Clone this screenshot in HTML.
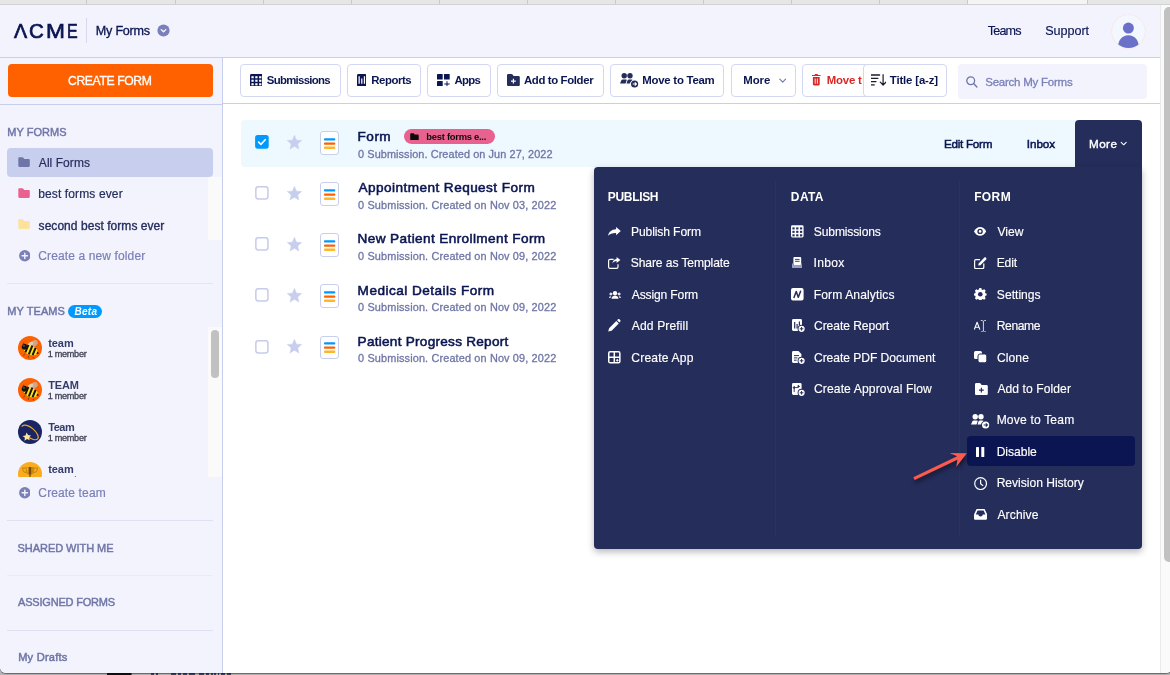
<!DOCTYPE html>
<html lang="en"><head><meta charset="utf-8"><title>My Forms</title>
<style>
html,body{margin:0;padding:0}
body{width:1170px;height:675px;position:relative;overflow:hidden;background:#b7b7b7;font-family:"Liberation Sans",sans-serif}
#win{will-change:transform;position:absolute;left:0;top:0;width:1172px;height:672.6px;overflow:hidden;background:#fff;border-radius:0 0 6px 6px;box-shadow:0 0.5px 1px rgba(0,0,0,0.45)}
#win div,#win svg,#win span.t{position:absolute;box-sizing:border-box}
span.t{white-space:pre;display:block}
.btn{background:#fff;border:1px solid #d3d7f1;border-radius:4px}
</style></head><body>
<div style="position:absolute;left:0;top:668px;width:1170px;height:7px;background:#b6b6b6"></div><div style="position:absolute;left:106.5px;top:668px;width:24px;height:7px;background:#141414"></div><div style="position:absolute;left:130.5px;top:668px;width:1px;height:7px;background:#c0392b"></div><div style="position:absolute;left:151px;top:673px;width:2.5px;height:2px;background:#2b3057;opacity:0.85"></div><div style="position:absolute;left:155.5px;top:673px;width:2.5px;height:2px;background:#2b3057;opacity:0.85"></div><div style="position:absolute;left:171px;top:673px;width:5px;height:2px;background:#2b3057;opacity:0.85"></div><div style="position:absolute;left:177.5px;top:673px;width:3.5px;height:2px;background:#2b3057;opacity:0.85"></div><div style="position:absolute;left:182.5px;top:673px;width:4.5px;height:2px;background:#2b3057;opacity:0.85"></div><div style="position:absolute;left:188.5px;top:673px;width:6.5px;height:2px;background:#2b3057;opacity:0.85"></div><div style="position:absolute;left:199px;top:673px;width:5px;height:2px;background:#2b3057;opacity:0.85"></div><div style="position:absolute;left:205.5px;top:673px;width:3.5px;height:2px;background:#2b3057;opacity:0.85"></div><div style="position:absolute;left:210.5px;top:673px;width:2.5px;height:2px;background:#2b3057;opacity:0.85"></div><div style="position:absolute;left:214px;top:673px;width:2px;height:2px;background:#2b3057;opacity:0.85"></div><div style="position:absolute;left:217.5px;top:673px;width:1.5px;height:2px;background:#2b3057;opacity:0.85"></div><div style="position:absolute;left:220.5px;top:673px;width:4.5px;height:2px;background:#2b3057;opacity:0.85"></div><div style="position:absolute;left:226.5px;top:673px;width:4.5px;height:2px;background:#2b3057;opacity:0.85"></div><div id="win"><div style="left:0px;top:0px;width:1170px;height:5px;background:#e6e6e6;border-bottom:1px solid #d2d2d2"></div>
<div style="left:968px;top:0px;width:119px;height:4px;background:#f4f4f4"></div>
<div style="left:86px;top:0px;width:1px;height:4px;background:#c9c9c9"></div>
<div style="left:175px;top:0px;width:1px;height:4px;background:#c9c9c9"></div>
<div style="left:263px;top:0px;width:1px;height:4px;background:#c9c9c9"></div>
<div style="left:351px;top:0px;width:1px;height:4px;background:#c9c9c9"></div>
<div style="left:439px;top:0px;width:1px;height:4px;background:#c9c9c9"></div>
<div style="left:527px;top:0px;width:1px;height:4px;background:#c9c9c9"></div>
<div style="left:615px;top:0px;width:1px;height:4px;background:#c9c9c9"></div>
<div style="left:703px;top:0px;width:1px;height:4px;background:#c9c9c9"></div>
<div style="left:791px;top:0px;width:1px;height:4px;background:#c9c9c9"></div>
<div style="left:879px;top:0px;width:1px;height:4px;background:#c9c9c9"></div>
<div style="left:967px;top:0px;width:1px;height:4px;background:#c9c9c9"></div>
<div style="left:1087px;top:0px;width:1px;height:4px;background:#c9c9c9"></div>
<div style="left:0px;top:5px;width:1160px;height:52px;background:#f3f3fe"></div>
<div style="left:0px;top:56.5px;width:1160px;height:1px;background:#c8ceed"></div>
<div aria-label="ACME" style="left:0;top:0;width:0;height:0"><span class="t" style="left:13.77px;top:21px;font-size:20.8px;line-height:20.8px;color:#0a1551;-webkit-text-stroke:0.7px #0a1551;transform:scaleX(0.949);transform-origin:0 0;">Λ</span><span class="t" style="left:28.76px;top:21px;font-size:20.8px;line-height:20.8px;color:#0a1551;-webkit-text-stroke:0.7px #0a1551;transform:scaleX(0.986);transform-origin:0 0;">C</span><span class="t" style="left:46.34px;top:21px;font-size:20.8px;line-height:20.8px;color:#0a1551;-webkit-text-stroke:0.7px #0a1551;transform:scaleX(1.092);transform-origin:0 0;">M</span><span class="t" style="left:67.14px;top:21px;font-size:20.8px;line-height:20.8px;color:#0a1551;-webkit-text-stroke:0.7px #0a1551;transform:scaleX(0.767);transform-origin:0 0;">E</span></div>
<div style="left:86px;top:18px;width:1px;height:25px;background:#d5d8f0"></div>
<span class="t" style="left:95.80px;top:25px;font-size:12.6px;line-height:12.6px;color:#0a1551;letter-spacing:-0.235px;-webkit-text-stroke:0.3px #0a1551;">My Forms</span>
<svg style="left:157.1px;top:24.2px;" width="13" height="13" viewBox="0 0 13 13"><circle cx="6.5" cy="6.5" r="6.1" fill="#7a80b8"/><path d="M4.2 5.6 L6.5 7.8 L8.8 5.6" fill="none" stroke="#fff" stroke-width="1.3" stroke-linecap="round" stroke-linejoin="round"/></svg>
<span class="t" style="left:987.66px;top:25px;font-size:12.6px;line-height:12.6px;color:#0a1551;letter-spacing:-0.781px;-webkit-text-stroke:0.15px #0a1551;">Teams</span>
<span class="t" style="left:1045.25px;top:25px;font-size:12.6px;line-height:12.6px;color:#0a1551;letter-spacing:-0.040px;-webkit-text-stroke:0.15px #0a1551;">Support</span>
<div style="left:1112px;top:14.6px;width:33px;height:33px;border-radius:50%;overflow:hidden;background:#f3f7ff;box-shadow:0 0 0 0.6px #fbe3d6"><svg style="left:0px;top:0px;" width="33" height="33" viewBox="0 0 33 33"><g fill="#6b71c9"><circle cx="16.4" cy="13.1" r="5.5"/><path d="M5.9 33 C5.9 25.3 10 20.2 16.4 20.2 C22.8 20.2 26.9 25.3 26.9 33 Z"/></g></svg></div>
<div style="left:0px;top:57.5px;width:222.5px;height:615px;background:#f3f3fe"></div>
<div style="left:222px;top:57.5px;width:1px;height:615px;background:#c8ceed"></div>
<div style="left:8.2px;top:63.8px;width:204.4px;height:33px;background:#ff6100;border-radius:4px"></div>
<span class="t" style="left:68.06px;top:75px;font-size:12.2px;line-height:12.2px;color:#fff;letter-spacing:-0.391px;-webkit-text-stroke:0.3px #fff;">CREATE FORM</span>
<div style="left:0px;top:103.7px;width:222px;height:1px;background:#c8ceed"></div>
<span class="t" style="left:7.22px;top:127px;font-size:11px;line-height:11px;color:#6f76a7;letter-spacing:0.030px;-webkit-text-stroke:0.45px #6f76a7;">MY FORMS</span>
<div style="left:7.2px;top:147.6px;width:205.8px;height:29.5px;background:#c8ceed;border-radius:4px"></div>
<svg style="left:18.4px;top:157.3px;" width="12.2" height="10.2" viewBox="0 0 12.2 10.2"><path d="M0.3 1.2 C0.3 0.6 0.8 0.2 1.4 0.2 H4.3 C4.8 0.2 5.1 0.4 5.4 0.8 L6.2 1.9 H10.6 C11.3 1.9 11.8 2.4 11.8 3.1 V8.8 C11.8 9.5 11.3 10 10.6 10 H1.5 C0.8 10 0.3 9.5 0.3 8.8 Z" fill="#6f76a7"/></svg>
<span class="t" style="left:38.83px;top:157px;font-size:12px;line-height:12px;color:#252d5b;letter-spacing:0.055px;-webkit-text-stroke:0.2px #252d5b;">All Forms</span>
<div style="left:207.6px;top:177.3px;width:14.4px;height:62.5px;background:#fafafb"></div>
<svg style="left:18.4px;top:188.4px;" width="12.2" height="10.2" viewBox="0 0 12.2 10.2"><path d="M0.3 1.2 C0.3 0.6 0.8 0.2 1.4 0.2 H4.3 C4.8 0.2 5.1 0.4 5.4 0.8 L6.2 1.9 H10.6 C11.3 1.9 11.8 2.4 11.8 3.1 V8.8 C11.8 9.5 11.3 10 10.6 10 H1.5 C0.8 10 0.3 9.5 0.3 8.8 Z" fill="#e9628f"/></svg>
<span class="t" style="left:38.17px;top:188px;font-size:12px;line-height:12px;color:#252d5b;letter-spacing:0.128px;-webkit-text-stroke:0.2px #252d5b;">best forms ever</span>
<svg style="left:18.4px;top:219.3px;" width="12.2" height="10.2" viewBox="0 0 12.2 10.2"><path d="M0.3 1.2 C0.3 0.6 0.8 0.2 1.4 0.2 H4.3 C4.8 0.2 5.1 0.4 5.4 0.8 L6.2 1.9 H10.6 C11.3 1.9 11.8 2.4 11.8 3.1 V8.8 C11.8 9.5 11.3 10 10.6 10 H1.5 C0.8 10 0.3 9.5 0.3 8.8 Z" fill="#fde29c"/></svg>
<span class="t" style="left:38.59px;top:220px;font-size:12px;line-height:12px;color:#252d5b;letter-spacing:0.049px;-webkit-text-stroke:0.35px #252d5b;">second best forms ever</span>
<svg style="left:18.9px;top:250.3px;" width="11.6" height="11.6" viewBox="0 0 11.6 11.6"><circle cx="5.8" cy="5.8" r="5.7" fill="#7a80b8"/><path d="M5.8 3.1 V8.5 M3.1 5.8 H8.5" stroke="#f3f3fe" stroke-width="1.4" stroke-linecap="round"/></svg>
<span class="t" style="left:38.33px;top:250px;font-size:12px;line-height:12px;color:#7a80b8;letter-spacing:0.119px;-webkit-text-stroke:0.2px #7a80b8;">Create a new folder</span>
<div style="left:7.2px;top:282.8px;width:205.8px;height:1px;background:#e4e6f5"></div>
<span class="t" style="left:7.22px;top:306px;font-size:11px;line-height:11px;color:#6f76a7;letter-spacing:0.095px;-webkit-text-stroke:0.45px #6f76a7;">MY TEAMS</span>
<div style="left:68.3px;top:304.6px;width:34px;height:13.4px;background:#0099ff;border-radius:7px"></div>
<span class="t" style="left:74.38px;top:307px;font-size:10px;line-height:10px;color:#fff;letter-spacing:0.313px;font-weight:700;font-style:italic;">Beta</span>
<div style="left:207.6px;top:327.3px;width:14.4px;height:150px;background:#fafafb"></div>
<div style="left:211.3px;top:329.8px;width:7.7px;height:48.2px;background:#c1c1c1;border-radius:4px"></div>
<svg style="left:17.7px;top:336.1px;" width="24" height="24" viewBox="0 0 24 24"><circle cx="12" cy="12" r="12" fill="#ff6100"/><ellipse cx="15.6" cy="7.6" rx="4.4" ry="2.9" fill="#cfa58c" transform="rotate(-28 15.6 7.6)"/><ellipse cx="12.6" cy="7.9" rx="3" ry="1.8" fill="#e3c9b3" transform="rotate(-28 12.6 7.9)"/><g transform="rotate(22 12.4 14)"><ellipse cx="12.6" cy="14" rx="7.6" ry="4.7" fill="#ffe01a"/><path d="M8.6 9.9 V18.1 M12.6 9.3 V18.7 M16.4 10 V18" stroke="#17130c" stroke-width="2" fill="none"/><ellipse cx="5.6" cy="13.2" rx="2.6" ry="2.9" fill="#17130c"/><circle cx="4.9" cy="12.6" r="0.9" fill="#4a5f9a"/><path d="M19.4 12.4 L21.6 14 L19.4 15.6 Z" fill="#17130c"/></g><path d="M6.6 17.6 L5.6 19.6 M10.6 19.8 L10.2 21.8 M15 21 L15.8 22.4 M4.6 9.6 L5.8 6.6" stroke="#5a3a12" stroke-width="0.8" fill="none"/></svg>
<span class="t" style="left:48.19px;top:338px;font-size:11px;line-height:11px;color:#343c6a;letter-spacing:-0.065px;font-weight:700;">team</span>
<span class="t" style="left:47.78px;top:350px;font-size:9.1px;line-height:9.1px;color:#3f4152;letter-spacing:-0.288px;-webkit-text-stroke:0.3px #3f4152;">1 member</span>
<svg style="left:17.7px;top:378.2px;" width="24" height="24" viewBox="0 0 24 24"><circle cx="12" cy="12" r="12" fill="#ff6100"/><ellipse cx="15.6" cy="7.6" rx="4.4" ry="2.9" fill="#cfa58c" transform="rotate(-28 15.6 7.6)"/><ellipse cx="12.6" cy="7.9" rx="3" ry="1.8" fill="#e3c9b3" transform="rotate(-28 12.6 7.9)"/><g transform="rotate(22 12.4 14)"><ellipse cx="12.6" cy="14" rx="7.6" ry="4.7" fill="#ffe01a"/><path d="M8.6 9.9 V18.1 M12.6 9.3 V18.7 M16.4 10 V18" stroke="#17130c" stroke-width="2" fill="none"/><ellipse cx="5.6" cy="13.2" rx="2.6" ry="2.9" fill="#17130c"/><circle cx="4.9" cy="12.6" r="0.9" fill="#4a5f9a"/><path d="M19.4 12.4 L21.6 14 L19.4 15.6 Z" fill="#17130c"/></g><path d="M6.6 17.6 L5.6 19.6 M10.6 19.8 L10.2 21.8 M15 21 L15.8 22.4 M4.6 9.6 L5.8 6.6" stroke="#5a3a12" stroke-width="0.8" fill="none"/></svg>
<span class="t" style="left:48.22px;top:380px;font-size:11px;line-height:11px;color:#343c6a;letter-spacing:-0.136px;font-weight:700;">TEAM</span>
<span class="t" style="left:47.78px;top:392px;font-size:9.1px;line-height:9.1px;color:#3f4152;letter-spacing:-0.288px;-webkit-text-stroke:0.3px #3f4152;">1 member</span>
<svg style="left:17.7px;top:419.9px;" width="24" height="24" viewBox="0 0 24 24"><circle cx="12" cy="12" r="12" fill="#1a2563"/><ellipse cx="12" cy="12.4" rx="10" ry="4.6" fill="none" stroke="#f0a72e" stroke-width="1.2" transform="rotate(40 12 12.4)" pathLength="100" stroke-dasharray="76 24" stroke-dashoffset="-48"/><path d="M8.6 12.6 l1.5 2.5 l2.9 0.3 l-2 2.1 l0.7 2.8 l-2.7 -1.2 l-2.5 1.6 l0.4 -2.9 l-2.3 -1.8 l2.9 -0.5 z" fill="#ffe6a0"/></svg>
<span class="t" style="left:48.22px;top:422px;font-size:11px;line-height:11px;color:#343c6a;letter-spacing:-0.479px;font-weight:700;">Team</span>
<span class="t" style="left:47.78px;top:434px;font-size:9.1px;line-height:9.1px;color:#3f4152;letter-spacing:-0.288px;-webkit-text-stroke:0.3px #3f4152;">1 member</span>
<div style="left:0;top:455px;width:207px;height:22px;overflow:hidden"><svg style="left:17.7px;top:6.8px;" width="24" height="24" viewBox="0 0 24 24"><circle cx="12" cy="12" r="12" fill="#fbab1e"/><path d="M7.8 5 H16.2 V8.6 C16.2 11.4 14.4 13 12 13 C9.6 13 7.8 11.4 7.8 8.6 Z" fill="#c98a12"/><path d="M10.9 5 H13.1 V12.8 H10.9 Z" fill="#7a4a08"/><path d="M8.6 5.6 H9.8 V11 Z" fill="#f3c24a"/><path d="M7.8 6.1 H4.6 C4.6 9.2 6.2 10.6 8.6 10.8 M16.2 6.1 H19.4 C19.4 9.2 17.8 10.6 15.4 10.8" fill="none" stroke="#c98a12" stroke-width="1.1"/><rect x="11.1" y="12.5" width="1.8" height="3" fill="#9a6a0e"/><rect x="8.6" y="15.2" width="6.8" height="1.8" fill="#8a5a0c"/></svg><span class="t" style="left:48.19px;top:9px;font-size:11px;line-height:11px;color:#343c6a;letter-spacing:-0.065px;font-weight:700;">team</span><span class="t" style="left:47.43px;top:21px;font-size:9.3px;line-height:9.3px;color:#4b4d5e;letter-spacing:-0.328px;">1 member</span></div>
<svg style="left:18.9px;top:487.3px;" width="11.6" height="11.6" viewBox="0 0 11.6 11.6"><circle cx="5.8" cy="5.8" r="5.7" fill="#7a80b8"/><path d="M5.8 3.1 V8.5 M3.1 5.8 H8.5" stroke="#f3f3fe" stroke-width="1.4" stroke-linecap="round"/></svg>
<span class="t" style="left:38.33px;top:487px;font-size:12px;line-height:12px;color:#7a80b8;letter-spacing:0.133px;-webkit-text-stroke:0.2px #7a80b8;">Create team</span>
<div style="left:7.2px;top:520px;width:205.8px;height:1px;background:#dfe1f1"></div>
<span class="t" style="left:17.49px;top:543px;font-size:11px;line-height:11px;color:#6f76a7;letter-spacing:-0.040px;-webkit-text-stroke:0.45px #6f76a7;">SHARED WITH ME</span>
<div style="left:7.2px;top:575px;width:205.8px;height:1px;background:#eaebf7"></div>
<span class="t" style="left:18.02px;top:597px;font-size:11px;line-height:11px;color:#6f76a7;letter-spacing:-0.193px;-webkit-text-stroke:0.45px #6f76a7;">ASSIGNED FORMS</span>
<div style="left:7.2px;top:629.5px;width:205.8px;height:1px;background:#dfe1f1"></div>
<span class="t" style="left:18.17px;top:652px;font-size:11.1px;line-height:11.1px;color:#6f76a7;letter-spacing:0.224px;-webkit-text-stroke:0.5px #6f76a7;">My Drafts</span>
<div style="left:222.5px;top:103px;width:937.5px;height:1px;background:#c8ceed"></div>
<div class="btn" style="left:240px;top:64px;width:101px;height:32.5px;"></div>
<svg style="left:249.6px;top:73.7px;" width="12.8" height="12.4" viewBox="0 0 12.8 12.4"><rect x="0" y="0" width="12.8" height="12.4" rx="1.5" fill="#0a1551"/><rect x="1.40" y="2.20" width="2.3" height="2.1" fill="#fff"/><rect x="5.25" y="2.20" width="2.3" height="2.1" fill="#fff"/><rect x="9.10" y="2.20" width="2.3" height="2.1" fill="#fff"/><rect x="1.40" y="5.70" width="2.3" height="2.1" fill="#fff"/><rect x="5.25" y="5.70" width="2.3" height="2.1" fill="#fff"/><rect x="9.10" y="5.70" width="2.3" height="2.1" fill="#fff"/><rect x="1.40" y="9.25" width="2.3" height="2.1" fill="#fff"/><rect x="5.25" y="9.25" width="2.3" height="2.1" fill="#fff"/><rect x="9.10" y="9.25" width="2.3" height="2.1" fill="#fff"/></svg>
<span class="t" style="left:266.72px;top:75px;font-size:11.4px;line-height:11.4px;color:#0a1551;letter-spacing:-0.691px;font-weight:700;">Submissions</span>
<div class="btn" style="left:347px;top:64px;width:74px;height:32.5px;"></div>
<svg style="left:356.7px;top:73.6px;" width="9.6" height="12.5" viewBox="0 0 9.6 12.5"><rect x="0" y="0" width="9.6" height="12.5" rx="1.5" fill="#0a1551"/><path d="M2.15 2.2 V9.8 M7.45 2.2 V9.8 M4.8 4.4 V9.8" stroke="#fff" stroke-width="1.25"/></svg>
<span class="t" style="left:371.37px;top:75px;font-size:11.4px;line-height:11.4px;color:#0a1551;letter-spacing:-0.478px;font-weight:700;">Reports</span>
<div class="btn" style="left:427px;top:64px;width:64px;height:32.5px;"></div>
<svg style="left:436.8px;top:73.8px;" width="13.2" height="12.4" viewBox="0 0 13.2 12.4"><g fill="#0a1551"><rect x="0" y="0" width="5.7" height="5.5" rx="0.6"/><rect x="7" y="0" width="5.7" height="5.5" rx="0.6"/><rect x="0" y="6.9" width="5.7" height="5.5" rx="0.6"/><path d="M9.5 7.2 h1 v2.2 h2.2 v1 h-2.2 v2.2 h-1 v-2.2 h-2.2 v-1 h2.2 z"/></g></svg>
<span class="t" style="left:454.54px;top:75px;font-size:11.4px;line-height:11.4px;color:#0a1551;letter-spacing:-0.708px;font-weight:700;">Apps</span>
<div class="btn" style="left:497px;top:64px;width:107px;height:32.5px;"></div>
<svg style="left:507px;top:74px;" width="12.8" height="12" viewBox="0 0 12.8 12"><path d="M0 1.3 C0 0.6 0.6 0 1.3 0 H4.4 C4.9 0 5.3 0.2 5.6 0.6 L6.6 2 H11.5 C12.3 2 12.8 2.6 12.8 3.3 V10.7 C12.8 11.4 12.3 12 11.5 12 H1.3 C0.6 12 0 11.4 0 10.7 Z" fill="#252d5b"/><path d="M6.4 4.7 V9.5 M4 7.1 H8.8" stroke="#fff" stroke-width="1.2"/></svg>
<span class="t" style="left:523.96px;top:75px;font-size:11.4px;line-height:11.4px;color:#0a1551;letter-spacing:-0.367px;font-weight:700;">Add to Folder</span>
<div class="btn" style="left:610px;top:64px;width:114px;height:32.5px;"></div>
<svg style="left:620px;top:72.5px;" width="19" height="15.4" viewBox="0 0 19 15.4"><g fill="#252d5b"><circle cx="4.2" cy="2.8" r="2.7"/><circle cx="10" cy="2.8" r="2.7"/><path d="M0 10.4 L1.4 7.2 C1.6 6.7 2.1 6.4 2.7 6.4 H5.9 C6.5 6.4 6.8 6.9 6.6 7.4 L5.5 10.4 Z"/><path d="M6.5 10.4 L7.6 7.2 C7.8 6.7 8.3 6.4 8.9 6.4 H11.6 C12.2 6.4 12.7 6.8 12.8 7.3 C11.3 7.7 10.4 8.9 10.2 10.4 Z"/><circle cx="14.6" cy="11" r="4.3" fill="#fff"/><circle cx="14.6" cy="11" r="3.6"/></g><path d="M12.7 11 H16 M14.8 9.4 L16.4 11 L14.8 12.6" stroke="#fff" stroke-width="1.15" fill="none"/></svg>
<span class="t" style="left:642.25px;top:75px;font-size:11.4px;line-height:11.4px;color:#0a1551;letter-spacing:-0.238px;font-weight:700;">Move to Team</span>
<div class="btn" style="left:731px;top:64px;width:65px;height:32.5px;"></div>
<span class="t" style="left:743.17px;top:75px;font-size:11.4px;line-height:11.4px;color:#0a1551;font-weight:700;">More</span>
<svg style="left:778.5px;top:77.5px;" width="7.4" height="5.4" viewBox="0 0 7.4 5.4"><path d="M0.8 1.2 L3.7 4.1 L6.6 1.2" fill="none" stroke="#6f76a7" stroke-width="1.1" stroke-linecap="round" stroke-linejoin="round"/></svg>
<div class="btn" style="left:802.3px;top:64px;width:70px;height:32.5px;overflow:hidden"></div>
<svg style="left:812px;top:74.2px;" width="8.6" height="11.4" viewBox="0 0 8.6 11.4"><path d="M0 1.5 H8.6 M2.8 0.5 H5.8" stroke="#dc2626" stroke-width="1.2" fill="none"/><path d="M0.9 3 H7.7 V10.2 C7.7 10.9 7.2 11.4 6.5 11.4 H2.1 C1.4 11.4 0.9 10.9 0.9 10.2 Z" fill="#dc2626"/><path d="M3.2 4.6 V9.7 M5.4 4.6 V9.7" stroke="#fff" stroke-width="0.9"/></svg>
<span class="t" style="left:826.76px;top:75px;font-size:11.4px;line-height:11.4px;color:#dc2626;letter-spacing:-0.214px;font-weight:700;">Move t</span>
<div class="btn" style="left:863px;top:64px;width:84px;height:32.5px;"></div>
<svg style="left:871px;top:74px;" width="15.4" height="12" viewBox="0 0 15.4 12"><path d="M0.2 1 H8.6 M0.2 4.3 H6.9 M0.2 7.6 H5 M0.2 10.9 H3.2" stroke="#1c1c2e" stroke-width="1.3" stroke-linecap="round" fill="none"/><path d="M12.1 0.7 V10.9 M9.3 8.2 L12.1 11 L14.9 8.2" stroke="#1c1c2e" stroke-width="1.2" fill="none" stroke-linecap="round" stroke-linejoin="round"/></svg>
<span class="t" style="left:889.87px;top:75px;font-size:11.4px;line-height:11.4px;color:#0a1551;letter-spacing:-0.164px;font-weight:700;">Title [a-z]</span>
<div style="left:957.7px;top:63.8px;width:189.3px;height:34.9px;background:#f3f3fe;border-radius:4px"></div>
<svg style="left:966.3px;top:76.1px;" width="11.6" height="11.6" viewBox="0 0 11.6 11.6"><circle cx="4.7" cy="4.7" r="3.9" fill="none" stroke="#6f76a7" stroke-width="1.3"/><path d="M7.6 7.6 L10.9 10.9" stroke="#6f76a7" stroke-width="1.4" stroke-linecap="round"/></svg>
<span class="t" style="left:985.19px;top:77px;font-size:11.5px;line-height:11.5px;color:#7a80b8;letter-spacing:-0.229px;-webkit-text-stroke:0.3px #7a80b8;">Search My Forms</span>
<div style="left:240.7px;top:120.2px;width:900.6px;height:46.4px;background:#edf8ff;border-radius:4px 0 0 4px"></div>
<svg style="left:255.45px;top:135.4px;" width="14" height="14" viewBox="0 0 14 14"><rect x="0.1" y="0.1" width="13.6" height="13.6" rx="2.6" fill="#0099ff"/><path d="M3.6 7.1 L5.9 9.4 L10.2 4.7" fill="none" stroke="#fff" stroke-width="1.6" stroke-linecap="round" stroke-linejoin="round"/></svg>
<svg style="left:287.1px;top:135.2px;" width="14.9" height="14.4" viewBox="0 0 14.4 13.8"><path d="M7.2 0.3 L9.1 4.9 L14.1 5.3 L10.3 8.6 L11.5 13.5 L7.2 10.9 L2.9 13.5 L4.1 8.6 L0.3 5.3 L5.3 4.9 Z" fill="#c8ceed" stroke="#c8ceed" stroke-width="0.5" stroke-linejoin="round"/></svg>
<div style="left:320.3px;top:131.3px;width:18.6px;height:23.6px;background:#fff;border:1px solid #c8ceed;border-radius:3px"></div>
<svg style="left:324px;top:138.0px;" width="12" height="12" viewBox="0 0 12 12"><rect x="0" y="0.2" width="11.3" height="2.3" rx="0.9" fill="#0099ff"/><rect x="0" y="4.4" width="11.3" height="2.3" rx="0.9" fill="#ff6100"/><rect x="0" y="8.6" width="11.3" height="2.3" rx="0.9" fill="#ffb629"/></svg>
<span class="t" style="left:357.62px;top:130px;font-size:13.6px;line-height:13.6px;color:#0a1551;letter-spacing:0.458px;-webkit-text-stroke:0.55px #0a1551;">Form</span>
<span class="t" style="left:358.03px;top:149px;font-size:10.9px;line-height:10.9px;color:#6f76a7;letter-spacing:0.088px;-webkit-text-stroke:0.3px #6f76a7;">0 Submission. Created on Jun 27, 2022</span>
<svg style="left:255.45px;top:186.35000000000002px;" width="14" height="14" viewBox="0 0 14 14"><rect x="0.85" y="0.85" width="12.1" height="12.1" rx="2.4" fill="#fff" stroke="#c6cbeb" stroke-width="1.5"/></svg>
<svg style="left:287.1px;top:186.25px;" width="14.9" height="14.4" viewBox="0 0 14.4 13.8"><path d="M7.2 0.3 L9.1 4.9 L14.1 5.3 L10.3 8.6 L11.5 13.5 L7.2 10.9 L2.9 13.5 L4.1 8.6 L0.3 5.3 L5.3 4.9 Z" fill="#c8ceed" stroke="#c8ceed" stroke-width="0.5" stroke-linejoin="round"/></svg>
<div style="left:320.3px;top:182.35000000000002px;width:18.6px;height:23.6px;background:#fff;border:1px solid #c8ceed;border-radius:3px"></div>
<svg style="left:324px;top:189.05px;" width="12" height="12" viewBox="0 0 12 12"><rect x="0" y="0.2" width="11.3" height="2.3" rx="0.9" fill="#0099ff"/><rect x="0" y="4.4" width="11.3" height="2.3" rx="0.9" fill="#ff6100"/><rect x="0" y="8.6" width="11.3" height="2.3" rx="0.9" fill="#ffb629"/></svg>
<span class="t" style="left:358.53px;top:181px;font-size:13.6px;line-height:13.6px;color:#0a1551;letter-spacing:0.438px;-webkit-text-stroke:0.55px #0a1551;">Appointment Request Form</span>
<span class="t" style="left:358.03px;top:200px;font-size:10.9px;line-height:10.9px;color:#6f76a7;letter-spacing:0.142px;-webkit-text-stroke:0.3px #6f76a7;">0 Submission. Created on Nov 03, 2022</span>
<svg style="left:255.45px;top:237.4px;" width="14" height="14" viewBox="0 0 14 14"><rect x="0.85" y="0.85" width="12.1" height="12.1" rx="2.4" fill="#fff" stroke="#c6cbeb" stroke-width="1.5"/></svg>
<svg style="left:287.1px;top:237.29999999999998px;" width="14.9" height="14.4" viewBox="0 0 14.4 13.8"><path d="M7.2 0.3 L9.1 4.9 L14.1 5.3 L10.3 8.6 L11.5 13.5 L7.2 10.9 L2.9 13.5 L4.1 8.6 L0.3 5.3 L5.3 4.9 Z" fill="#c8ceed" stroke="#c8ceed" stroke-width="0.5" stroke-linejoin="round"/></svg>
<div style="left:320.3px;top:233.4px;width:18.6px;height:23.6px;background:#fff;border:1px solid #c8ceed;border-radius:3px"></div>
<svg style="left:324px;top:240.1px;" width="12" height="12" viewBox="0 0 12 12"><rect x="0" y="0.2" width="11.3" height="2.3" rx="0.9" fill="#0099ff"/><rect x="0" y="4.4" width="11.3" height="2.3" rx="0.9" fill="#ff6100"/><rect x="0" y="8.6" width="11.3" height="2.3" rx="0.9" fill="#ffb629"/></svg>
<span class="t" style="left:357.62px;top:232px;font-size:13.6px;line-height:13.6px;color:#0a1551;letter-spacing:0.384px;-webkit-text-stroke:0.55px #0a1551;">New Patient Enrollment Form</span>
<span class="t" style="left:358.03px;top:251px;font-size:10.9px;line-height:10.9px;color:#6f76a7;letter-spacing:0.142px;-webkit-text-stroke:0.3px #6f76a7;">0 Submission. Created on Nov 09, 2022</span>
<svg style="left:255.45px;top:288.45px;" width="14" height="14" viewBox="0 0 14 14"><rect x="0.85" y="0.85" width="12.1" height="12.1" rx="2.4" fill="#fff" stroke="#c6cbeb" stroke-width="1.5"/></svg>
<svg style="left:287.1px;top:288.34999999999997px;" width="14.9" height="14.4" viewBox="0 0 14.4 13.8"><path d="M7.2 0.3 L9.1 4.9 L14.1 5.3 L10.3 8.6 L11.5 13.5 L7.2 10.9 L2.9 13.5 L4.1 8.6 L0.3 5.3 L5.3 4.9 Z" fill="#c8ceed" stroke="#c8ceed" stroke-width="0.5" stroke-linejoin="round"/></svg>
<div style="left:320.3px;top:284.45px;width:18.6px;height:23.6px;background:#fff;border:1px solid #c8ceed;border-radius:3px"></div>
<svg style="left:324px;top:291.15px;" width="12" height="12" viewBox="0 0 12 12"><rect x="0" y="0.2" width="11.3" height="2.3" rx="0.9" fill="#0099ff"/><rect x="0" y="4.4" width="11.3" height="2.3" rx="0.9" fill="#ff6100"/><rect x="0" y="8.6" width="11.3" height="2.3" rx="0.9" fill="#ffb629"/></svg>
<span class="t" style="left:357.62px;top:284px;font-size:13.6px;line-height:13.6px;color:#0a1551;letter-spacing:0.466px;-webkit-text-stroke:0.55px #0a1551;">Medical Details Form</span>
<span class="t" style="left:358.03px;top:302px;font-size:10.9px;line-height:10.9px;color:#6f76a7;letter-spacing:0.142px;-webkit-text-stroke:0.3px #6f76a7;">0 Submission. Created on Nov 09, 2022</span>
<svg style="left:255.45px;top:339.5px;" width="14" height="14" viewBox="0 0 14 14"><rect x="0.85" y="0.85" width="12.1" height="12.1" rx="2.4" fill="#fff" stroke="#c6cbeb" stroke-width="1.5"/></svg>
<svg style="left:287.1px;top:339.4px;" width="14.9" height="14.4" viewBox="0 0 14.4 13.8"><path d="M7.2 0.3 L9.1 4.9 L14.1 5.3 L10.3 8.6 L11.5 13.5 L7.2 10.9 L2.9 13.5 L4.1 8.6 L0.3 5.3 L5.3 4.9 Z" fill="#c8ceed" stroke="#c8ceed" stroke-width="0.5" stroke-linejoin="round"/></svg>
<div style="left:320.3px;top:335.5px;width:18.6px;height:23.6px;background:#fff;border:1px solid #c8ceed;border-radius:3px"></div>
<svg style="left:324px;top:342.2px;" width="12" height="12" viewBox="0 0 12 12"><rect x="0" y="0.2" width="11.3" height="2.3" rx="0.9" fill="#0099ff"/><rect x="0" y="4.4" width="11.3" height="2.3" rx="0.9" fill="#ff6100"/><rect x="0" y="8.6" width="11.3" height="2.3" rx="0.9" fill="#ffb629"/></svg>
<span class="t" style="left:357.62px;top:335px;font-size:13.6px;line-height:13.6px;color:#0a1551;letter-spacing:0.255px;-webkit-text-stroke:0.55px #0a1551;">Patient Progress Report</span>
<span class="t" style="left:358.03px;top:353px;font-size:10.9px;line-height:10.9px;color:#6f76a7;letter-spacing:0.142px;-webkit-text-stroke:0.3px #6f76a7;">0 Submission. Created on Nov 09, 2022</span>
<div style="left:404.2px;top:129.2px;width:91.2px;height:14.8px;background:#e9628f;border-radius:7.4px"></div>
<svg style="left:410.2px;top:132.6px;" width="9" height="7.6" viewBox="0 0 12.2 10.2"><path d="M0.3 1.2 C0.3 0.6 0.8 0.2 1.4 0.2 H4.3 C4.8 0.2 5.1 0.4 5.4 0.8 L6.2 1.9 H10.6 C11.3 1.9 11.8 2.4 11.8 3.1 V8.8 C11.8 9.5 11.3 10 10.6 10 H1.5 C0.8 10 0.3 9.5 0.3 8.8 Z" fill="#0b0b0b"/></svg>
<span class="t" style="left:426.35px;top:132px;font-size:9.4px;line-height:9.4px;color:#0b0b0b;letter-spacing:-0.259px;font-weight:700;">best forms e...</span>
<span class="t" style="left:943.95px;top:138px;font-size:11.7px;line-height:11.7px;color:#0a1551;letter-spacing:-0.265px;-webkit-text-stroke:0.5px #0a1551;">Edit Form</span>
<span class="t" style="left:1026.86px;top:138px;font-size:11.7px;line-height:11.7px;color:#0a1551;letter-spacing:-0.102px;-webkit-text-stroke:0.5px #0a1551;">Inbox</span>
<div style="left:1075px;top:120.2px;width:67.2px;height:47.5px;background:#252d5b;border-radius:4px 4px 0 0"></div>
<span class="t" style="left:1089.12px;top:138px;font-size:11.7px;line-height:11.7px;color:#fff;letter-spacing:0.380px;-webkit-text-stroke:0.4px #fff;">More</span>
<svg style="left:1119.6px;top:140.6px;" width="7.4" height="5.4" viewBox="0 0 7.4 5.4"><path d="M1.2 1.4 L3.7 3.8 L6.2 1.4" fill="none" stroke="#fff" stroke-width="1.1" stroke-linecap="round" stroke-linejoin="round"/></svg>
<div style="left:593.8px;top:166.8px;width:548.4px;height:381.8px;background:#252d5b;border-radius:4px 0 4px 4px;box-shadow:0 3px 7px rgba(0,0,0,0.28)"></div>
<div style="left:775.3px;top:181px;width:1px;height:354.5px;background:#2a3260"></div>
<div style="left:958.6px;top:181px;width:1px;height:354.5px;background:#2a3260"></div>
<span class="t" style="left:607.85px;top:191px;font-size:12px;line-height:12px;color:#fff;letter-spacing:-0.341px;font-weight:700;">PUBLISH</span>
<span class="t" style="left:790.85px;top:191px;font-size:12px;line-height:12px;color:#fff;letter-spacing:0.377px;font-weight:700;">DATA</span>
<span class="t" style="left:974.13px;top:191px;font-size:12px;line-height:12px;color:#fff;letter-spacing:0.396px;font-weight:700;">FORM</span>
<div style="left:967px;top:436.4px;width:168px;height:29.5px;background:#0a1551;border-radius:4px"></div>
<span class="t" style="left:630.94px;top:226px;font-size:12.1px;line-height:12.1px;color:#fff;letter-spacing:-0.108px;-webkit-text-stroke:0.15px #fff;">Publish Form</span>
<span class="t" style="left:630.66px;top:257px;font-size:12.1px;line-height:12.1px;color:#fff;letter-spacing:-0.091px;-webkit-text-stroke:0.15px #fff;">Share as Template</span>
<span class="t" style="left:631.78px;top:289px;font-size:12.1px;line-height:12.1px;color:#fff;letter-spacing:-0.152px;-webkit-text-stroke:0.15px #fff;">Assign Form</span>
<span class="t" style="left:631.78px;top:320px;font-size:12.1px;line-height:12.1px;color:#fff;letter-spacing:0.121px;-webkit-text-stroke:0.15px #fff;">Add Prefill</span>
<span class="t" style="left:631.27px;top:352px;font-size:12.1px;line-height:12.1px;color:#fff;letter-spacing:0.185px;-webkit-text-stroke:0.15px #fff;">Create App</span>
<span class="t" style="left:813.84px;top:226px;font-size:12.1px;line-height:12.1px;color:#fff;letter-spacing:-0.154px;-webkit-text-stroke:0.15px #fff;">Submissions</span>
<span class="t" style="left:813.49px;top:257px;font-size:12.1px;line-height:12.1px;color:#fff;letter-spacing:0.324px;-webkit-text-stroke:0.15px #fff;">Inbox</span>
<span class="t" style="left:813.64px;top:289px;font-size:12.1px;line-height:12.1px;color:#fff;letter-spacing:0.124px;-webkit-text-stroke:0.15px #fff;">Form Analytics</span>
<span class="t" style="left:813.96px;top:320px;font-size:12.1px;line-height:12.1px;color:#fff;letter-spacing:-0.060px;-webkit-text-stroke:0.15px #fff;">Create Report</span>
<span class="t" style="left:813.96px;top:352px;font-size:12.1px;line-height:12.1px;color:#fff;letter-spacing:-0.054px;-webkit-text-stroke:0.15px #fff;">Create PDF Document</span>
<span class="t" style="left:813.96px;top:383px;font-size:12.1px;line-height:12.1px;color:#fff;letter-spacing:0.118px;-webkit-text-stroke:0.15px #fff;">Create Approval Flow</span>
<span class="t" style="left:997.46px;top:226px;font-size:12.1px;line-height:12.1px;color:#fff;letter-spacing:0.006px;-webkit-text-stroke:0.15px #fff;">View</span>
<span class="t" style="left:996.64px;top:257px;font-size:12.1px;line-height:12.1px;color:#fff;letter-spacing:-0.096px;-webkit-text-stroke:0.15px #fff;">Edit</span>
<span class="t" style="left:996.84px;top:289px;font-size:12.1px;line-height:12.1px;color:#fff;letter-spacing:0.019px;-webkit-text-stroke:0.15px #fff;">Settings</span>
<span class="t" style="left:996.63px;top:320px;font-size:12.1px;line-height:12.1px;color:#fff;letter-spacing:-0.354px;-webkit-text-stroke:0.15px #fff;">Rename</span>
<span class="t" style="left:996.96px;top:352px;font-size:12.1px;line-height:12.1px;color:#fff;letter-spacing:0.080px;-webkit-text-stroke:0.15px #fff;">Clone</span>
<span class="t" style="left:997.40px;top:383px;font-size:12.1px;line-height:12.1px;color:#fff;letter-spacing:0.078px;-webkit-text-stroke:0.15px #fff;">Add to Folder</span>
<span class="t" style="left:996.63px;top:414px;font-size:12.1px;line-height:12.1px;color:#fff;letter-spacing:0.171px;-webkit-text-stroke:0.15px #fff;">Move to Team</span>
<span class="t" style="left:996.63px;top:446px;font-size:12.1px;line-height:12.1px;color:#fff;letter-spacing:-0.028px;-webkit-text-stroke:0.15px #fff;">Disable</span>
<span class="t" style="left:996.63px;top:477px;font-size:12.1px;line-height:12.1px;color:#fff;letter-spacing:-0.019px;-webkit-text-stroke:0.15px #fff;">Revision History</span>
<span class="t" style="left:997.40px;top:509px;font-size:12.1px;line-height:12.1px;color:#fff;letter-spacing:0.116px;-webkit-text-stroke:0.15px #fff;">Archive</span>
<svg style="left:608.1px;top:227.1px;" width="12.8" height="8.8" viewBox="0 0 12.8 8.8"><path d="M8.1 0 L12.8 4.1 L8.1 8.3 V5.9 C4.6 5.8 2 6.7 0 8.8 C0.7 5 3.4 2.6 8.1 2.3 Z" fill="#fff"/></svg>
<svg style="left:608.3px;top:256.6px;" width="12.4" height="12" viewBox="0 0 12.4 12"><path d="M5.6 2.4 H2 C1.2 2.4 0.6 3 0.6 3.8 V10 C0.6 10.8 1.2 11.4 2 11.4 H8.6 C9.4 11.4 10 10.8 10 10 V7.2" fill="none" stroke="#fff" stroke-width="1.2"/><path d="M8.6 0 L12.4 3 L8.6 6 V4.1 C6.6 4.1 5.2 5 4.4 6.6 C4.5 4 6 2.2 8.6 1.9 Z" fill="#fff"/></svg>
<svg style="left:608.5px;top:290.8px;" width="12" height="7.8" viewBox="0 0 12 7.8"><g fill="#fff"><circle cx="6" cy="2.2" r="2.2"/><path d="M2.5 7.8 C2.5 5.8 4 4.8 6 4.8 C8 4.8 9.5 5.8 9.5 7.8 Z"/><circle cx="1.9" cy="2.9" r="1.5" opacity="0.85"/><circle cx="10.1" cy="2.9" r="1.5" opacity="0.85"/><path d="M0 7 C0 5.6 0.8 4.9 2.2 4.9 C1.8 5.6 1.6 6.2 1.6 7 Z M12 7 C12 5.6 11.2 4.9 9.8 4.9 C10.2 5.6 10.4 6.2 10.4 7 Z" opacity="0.85"/></g></svg>
<svg style="left:608.2px;top:319px;" width="12.6" height="12.8" viewBox="0 0 12.6 12.8"><path d="M0.2 12.6 L1.1 9.2 L8.3 2 L10.8 4.5 L3.6 11.7 Z M9.1 1.2 L10 0.3 C10.4 -0.1 11 -0.1 11.4 0.3 L12.3 1.2 C12.7 1.6 12.7 2.2 12.3 2.6 L11.4 3.5 Z" fill="#fff"/></svg>
<svg style="left:608px;top:351px;" width="12.6" height="12.6" viewBox="0 0 12.6 12.6"><rect x="0.75" y="0.75" width="11.1" height="11.1" rx="1.4" fill="none" stroke="#fff" stroke-width="1.5"/><path d="M6.3 0.6 V12 M0.6 6.3 H12" stroke="#fff" stroke-width="1.5"/><path d="M9.3 8 V10.6 M8 9.3 H10.6" stroke="#fff" stroke-width="1"/></svg>
<svg style="left:791.1px;top:225.1px;" width="12.6" height="12.6" viewBox="0 0 12.8 12.4"><rect x="0" y="0" width="12.8" height="12.4" rx="1.5" fill="#fff"/><rect x="1.40" y="2.20" width="2.3" height="2.1" fill="#252d5b"/><rect x="5.25" y="2.20" width="2.3" height="2.1" fill="#252d5b"/><rect x="9.10" y="2.20" width="2.3" height="2.1" fill="#252d5b"/><rect x="1.40" y="5.70" width="2.3" height="2.1" fill="#252d5b"/><rect x="5.25" y="5.70" width="2.3" height="2.1" fill="#252d5b"/><rect x="9.10" y="5.70" width="2.3" height="2.1" fill="#252d5b"/><rect x="1.40" y="9.25" width="2.3" height="2.1" fill="#252d5b"/><rect x="5.25" y="9.25" width="2.3" height="2.1" fill="#252d5b"/><rect x="9.10" y="9.25" width="2.3" height="2.1" fill="#252d5b"/></svg>
<svg style="left:791.8px;top:256.7px;" width="10.6" height="11.6" viewBox="0 0 10.6 11.6"><rect x="1.4" y="0" width="7.8" height="8" rx="1" fill="#fff"/><path d="M3 2.4 H7.6 M3 4.3 H7.6" stroke="#252d5b" stroke-width="0.9"/><path d="M0 6.6 L1.4 6.6 L1.4 8 H9.2 V6.6 H10.6 V10.4 C10.6 11.1 10.1 11.6 9.4 11.6 H1.2 C0.5 11.6 0 11.1 0 10.4 Z" fill="#9aa0c4"/></svg>
<svg style="left:791.1px;top:288px;" width="12.6" height="12.6" viewBox="0 0 12.6 12.6"><rect x="0" y="0" width="12.6" height="12.6" rx="2" fill="#fff"/><path d="M3 9.4 L5.2 3.4 L7.3 9.2 L9.6 3.2" fill="none" stroke="#252d5b" stroke-width="1.5" stroke-linejoin="round" stroke-linecap="round"/></svg>
<svg style="left:792px;top:319.2px;" width="13.7" height="13.9" viewBox="0 0 13.7 13.9"><rect x="0" y="0" width="10" height="12" rx="1.4" fill="#fff"/><path d="M2.7 3 V9.4 M5.1 5 V9.4 M7.4 2.6 V6" stroke="#252d5b" stroke-width="1.2"/><circle cx="9.6" cy="9.8" r="4" fill="#252d5b"/><circle cx="9.6" cy="9.8" r="3.1" fill="#fff"/><path d="M9.6 8 V11.6 M7.8 9.8 H11.4" stroke="#252d5b" stroke-width="1"/></svg>
<svg style="left:792.4px;top:351.4px;" width="13.7" height="13.9" viewBox="0 0 13.7 13.9"><path d="M0 1.4 C0 0.6 0.6 0 1.4 0 H6.4 L9.4 3 V10.6 C9.4 11.4 8.8 12 8 12 H1.4 C0.6 12 0 11.4 0 10.6 Z" fill="#fff"/><path d="M2 4.6 H7 M2 6.9 H5.4 M2 9.2 H4.6" stroke="#252d5b" stroke-width="1"/><circle cx="9.6" cy="9.8" r="4" fill="#252d5b"/><circle cx="9.6" cy="9.8" r="3.1" fill="#fff"/><path d="M9.6 8 V11.6 M7.8 9.8 H11.4" stroke="#252d5b" stroke-width="1"/></svg>
<svg style="left:792.4px;top:382.8px;" width="13.7" height="13.9" viewBox="0 0 13.7 13.9"><rect x="0" y="0" width="9.6" height="12" rx="1.4" fill="#fff"/><path d="M2.2 3.4 L3.4 4.6 L2.2 5.8 L1 4.6 Z M6 2.4 L7.6 3.4 L6 4.4 Z M3.4 4.6 H6 M2.2 5.8 V9" stroke="#252d5b" stroke-width="0.9" fill="#252d5b"/><circle cx="9.6" cy="9.8" r="4" fill="#252d5b"/><circle cx="9.6" cy="9.8" r="3.1" fill="#fff"/><path d="M9.6 8 V11.6 M7.8 9.8 H11.4" stroke="#252d5b" stroke-width="1"/></svg>
<svg style="left:974.3px;top:226.8px;" width="12.2" height="8.8" viewBox="0 0 12.2 8.8"><path d="M0 4.4 C1.4 1.6 3.6 0 6.1 0 C8.6 0 10.8 1.6 12.2 4.4 C10.8 7.2 8.6 8.8 6.1 8.8 C3.6 8.8 1.4 7.2 0 4.4 Z" fill="#fff"/><circle cx="6.1" cy="4.4" r="2.7" fill="#252d5b"/><circle cx="6.1" cy="4.4" r="1.3" fill="#fff"/></svg>
<svg style="left:974px;top:256.6px;" width="12.6" height="12.2" viewBox="0 0 12.6 12.2"><path d="M6 2.6 H2 C1.2 2.6 0.6 3.2 0.6 4 V10.2 C0.6 11 1.2 11.6 2 11.6 H8.4 C9.2 11.6 9.8 11 9.8 10.2 V6.4" fill="none" stroke="#fff" stroke-width="1.2"/><path d="M4.2 8.6 L4.6 6.4 L10.4 0.6 C10.8 0.2 11.4 0.2 11.8 0.6 L12.2 1 C12.6 1.4 12.6 2 12.2 2.4 L6.4 8.2 Z" fill="#fff"/></svg>
<svg style="left:974.2px;top:287.7px;" width="12.6" height="12.6" viewBox="0 0 12.6 12.6"><path d="M5.3 0 H7.3 L7.7 1.6 C8.1 1.7 8.5 1.9 8.8 2.1 L10.3 1.3 L11.7 2.7 L10.9 4.2 C11.1 4.5 11.3 4.9 11.4 5.3 L12.6 5.6 V7.4 L11.4 7.7 C11.3 8.1 11.1 8.5 10.9 8.8 L11.7 10.3 L10.3 11.7 L8.8 10.9 C8.5 11.1 8.1 11.3 7.7 11.4 L7.3 12.6 H5.3 L4.9 11.4 C4.5 11.3 4.1 11.1 3.8 10.9 L2.3 11.7 L0.9 10.3 L1.7 8.8 C1.5 8.5 1.3 8.1 1.2 7.7 L0 7.4 V5.6 L1.2 5.3 C1.3 4.9 1.5 4.5 1.7 4.2 L0.9 2.7 L2.3 1.3 L3.8 2.1 C4.1 1.9 4.5 1.7 4.9 1.6 Z" fill="#fff"/><circle cx="6.3" cy="6.3" r="2.3" fill="#252d5b"/></svg>
<svg style="left:974.2px;top:320px;" width="12.4" height="12.4" viewBox="0 0 12.4 12.4"><path d="M0.3 9.6 L3.1 2.2 L5.9 9.6 M1.3 7.2 H4.9" fill="none" stroke="#fff" stroke-width="1.1" stroke-linejoin="round"/><path d="M6.8 0.4 C8 0.4 9 0.7 9.4 1.4 C9.8 0.7 10.8 0.4 12 0.4 M9.4 1.4 V11 M6.8 12 C8 12 9 11.7 9.4 11 C9.8 11.7 10.8 12 12 12" fill="none" stroke="#fff" stroke-width="0.8"/></svg>
<svg style="left:974px;top:351.4px;" width="12.8" height="11.8" viewBox="0 0 12.8 11.8"><rect x="0" y="0" width="8" height="8" rx="1.6" fill="#fff"/><rect x="4" y="3" width="8.8" height="8.8" rx="2" fill="#fff" stroke="#252d5b" stroke-width="1"/></svg>
<svg style="left:974.8px;top:383.2px;" width="12.8" height="12" viewBox="0 0 12.8 12"><path d="M0 1.3 C0 0.6 0.6 0 1.3 0 H4.4 C4.9 0 5.3 0.2 5.6 0.6 L6.6 2 H11.5 C12.3 2 12.8 2.6 12.8 3.3 V10.7 C12.8 11.4 12.3 12 11.5 12 H1.3 C0.6 12 0 11.4 0 10.7 Z" fill="#fff"/><path d="M6.4 4.7 V9.5 M4 7.1 H8.8" stroke="#252d5b" stroke-width="1.2"/></svg>
<svg style="left:970.8px;top:413.9px;" width="19" height="15.4" viewBox="0 0 19 15.4"><g fill="#fff"><circle cx="4.2" cy="2.8" r="2.7"/><circle cx="10" cy="2.8" r="2.7"/><path d="M0 10.4 L1.4 7.2 C1.6 6.7 2.1 6.4 2.7 6.4 H5.9 C6.5 6.4 6.8 6.9 6.6 7.4 L5.5 10.4 Z"/><path d="M6.5 10.4 L7.6 7.2 C7.8 6.7 8.3 6.4 8.9 6.4 H11.6 C12.2 6.4 12.7 6.8 12.8 7.3 C11.3 7.7 10.4 8.9 10.2 10.4 Z"/><circle cx="14.6" cy="11" r="4.3" fill="#252d5b"/><circle cx="14.6" cy="11" r="3.6"/></g><path d="M12.7 11 H16 M14.8 9.4 L16.4 11 L14.8 12.6" stroke="#252d5b" stroke-width="1.15" fill="none"/></svg>
<svg style="left:976.3px;top:446.9px;" width="8.4" height="10" viewBox="0 0 8.4 10"><rect x="0" y="0" width="3" height="10" rx="0.6" fill="#fff"/><rect x="5.3" y="0" width="3" height="10" rx="0.6" fill="#fff"/></svg>
<svg style="left:973.8px;top:476.9px;" width="13.2" height="13.2" viewBox="0 0 13.2 13.2"><circle cx="6.6" cy="6.6" r="5.9" fill="none" stroke="#fff" stroke-width="1.2"/><path d="M6.6 3.2 V6.8 L8.8 8.4" fill="none" stroke="#fff" stroke-width="1.2" stroke-linecap="round"/></svg>
<svg style="left:973.8px;top:509.4px;" width="13.2" height="10.8" viewBox="0 0 13.2 10.8"><path d="M2.6 0 H10.6 L13.2 5.4 V9.4 C13.2 10.2 12.6 10.8 11.8 10.8 H1.4 C0.6 10.8 0 10.2 0 9.4 V5.4 Z" fill="#fff"/><path d="M3.6 1.6 H9.6 L11.4 5.6 H8.8 C8.8 6.8 7.8 7.6 6.6 7.6 C5.4 7.6 4.4 6.8 4.4 5.6 H1.8 Z" fill="#252d5b"/></svg>
<svg style="left:900px;top:440px;" width="80" height="52" viewBox="0 0 80 52"><g style="filter:drop-shadow(1.5px 3px 2px rgba(0,0,0,0.5))"><path d="M13.3 37.2 L57.1 16.3 L49.6 13.1 L66.9 13.3 L56.2 26.9 L57.4 19.7 L14.7 40 Z" fill="#fb5a4e"/></g></svg>
<div style="left:1160px;top:5px;width:10px;height:668px;background:#fafafa;border-left:1px solid #e9e9e9"></div>
<div style="left:1164.3px;top:7px;width:12px;height:555px;background:#c1c1c1;border-radius:5px"></div></div>
</body></html>
